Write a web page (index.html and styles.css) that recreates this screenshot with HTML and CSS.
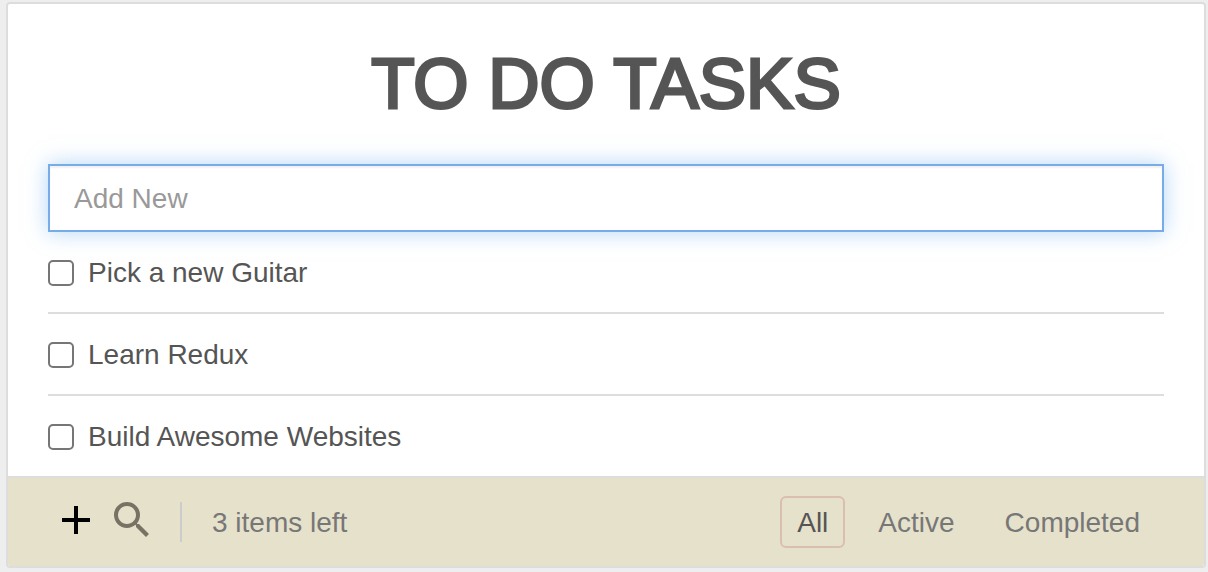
FILE: index.html
```html
<!DOCTYPE html>
<html lang="en">
<head>
<meta charset="utf-8">
<meta name="viewport" content="width=device-width, initial-scale=1">
<title>To Do Tasks</title>
<link rel="stylesheet" href="styles.css">
</head>
<body>
<main class="card">
  <div class="content">
    <h1 class="title">TO DO TASKS</h1>
    <input class="new-task" type="text" placeholder="Add New" aria-label="Add New">
    <ul class="tasks">
      <li class="task"><label class="task-label"><input class="check" type="checkbox">Pick a new Guitar</label></li>
      <li class="task"><label class="task-label"><input class="check" type="checkbox">Learn Redux</label></li>
      <li class="task"><label class="task-label"><input class="check" type="checkbox">Build Awesome Websites</label></li>
    </ul>
  </div>
  <footer class="footer">
    <div class="actions">
      <button class="icon-button" type="button" aria-label="Add">
        <svg class="icon" viewBox="0 0 24 24"><path d="M19 13h-6v6h-2v-6H5v-2h6V5h2v6h6v2z"/></svg>
      </button>
      <button class="icon-button muted" type="button" aria-label="Search">
        <svg class="icon" viewBox="0 0 24 24"><path d="M15.5 14h-.79l-.28-.27C15.41 12.59 16 11.11 16 9.5 16 5.91 13.09 3 9.5 3S3 5.91 3 9.5 5.91 16 9.5 16c1.61 0 3.09-.59 4.23-1.57l.27.28v.79l5 4.99L20.49 19l-4.99-5zm-6 0C7.01 14 5 11.99 5 9.5S7.01 5 9.5 5 14 7.01 14 9.5 11.99 14 9.5 14z"/></svg>
      </button>
    </div>
    <span class="count">3 items left</span>
    <nav class="filters" aria-label="Filter tasks">
      <a class="filter selected" href="#all">All</a>
      <a class="filter" href="#active">Active</a>
      <a class="filter" href="#completed">Completed</a>
    </nav>
  </footer>
</main>
</body>
</html>
```
FILE: styles.css
```css
* {
  box-sizing: border-box;
}

body {
  margin: 0;
  padding: 2px 2px 4px 6px;
  background: #eee;
  color: #555;
  font: 28px/38px "Helvetica Neue", Helvetica, "Liberation Sans", Arial, sans-serif;
}

.card {
  border: 2px solid #ddd;
  border-radius: 4px;
  background: #fff;
}

.content {
  padding: 40px 40px 0;
}

.title {
  margin: 0 0 40px;
  font-size: 71px;
  font-weight: 400;
  line-height: 80px;
  text-align: center;
  -webkit-text-stroke: 3px #555;
}

.new-task {
  display: block;
  width: 100%;
  height: 68px;
  padding: 2px 24px 0;
  border: 2px solid #78ace9;
  border-radius: 0;
  outline: none;
  background: #fff;
  box-shadow: inset 0 2px 2px rgba(0, 0, 0, 0.06), 0 0 20px rgba(104, 174, 239, 0.5);
  color: #555;
  font: inherit;
}

.new-task::placeholder {
  color: #999;
  opacity: 1;
}

.tasks {
  margin: 0;
  padding: 0;
  list-style: none;
}

.task {
  padding: 22px 0 20px;
}

.task + .task {
  border-top: 2px solid #ddd;
}

.task-label {
  display: flex;
  align-items: center;
  gap: 14px;
}

.check {
  flex: none;
  appearance: none;
  width: 26px;
  height: 26px;
  margin: 0;
  border: 2px solid #767676;
  border-radius: 5px;
  background: #fff;
}

.check:checked {
  background: #767676;
}

.footer {
  display: flex;
  align-items: center;
  padding: 18px 47px 18px 44px;
  border-top: 2px solid #ddd;
  border-radius: 0 0 2px 2px;
  background: #e6e1cb;
  color: #777;
}

.actions {
  display: flex;
  align-self: flex-start;
  gap: 8px;
}

.icon-button {
  width: 48px;
  height: 48px;
  padding: 0;
  border: 0;
  background: none;
  color: #000;
}

.muted {
  color: #777364;
}

.icon {
  display: block;
  width: 48px;
  height: 48px;
  fill: currentColor;
}

.count {
  margin-left: 24px;
  padding: 2px 0 0 30px;
  border-left: 2px solid #ccc;
}

.filters {
  display: flex;
  gap: 16px;
  margin-left: auto;
}

.filter {
  padding: 6px 15px 4px;
  border: 2px solid transparent;
  border-radius: 6px;
  color: inherit;
  text-decoration: none;
}

.selected {
  border-color: #dabfb0;
  color: #555;
}
```
